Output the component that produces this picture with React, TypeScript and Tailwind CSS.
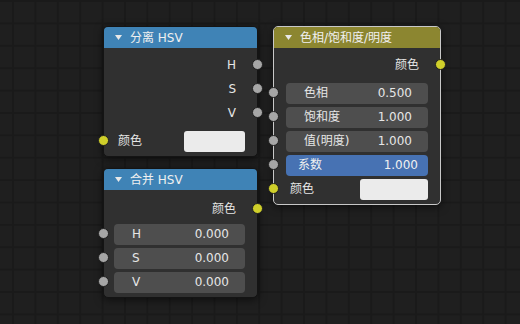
import React from 'react'

const font = { fontFamily: '"DejaVu Sans", "Noto Sans CJK SC", sans-serif' }

function Socket({ side, color }: { side: 'left' | 'right'; color: 'grey' | 'yellow' }) {
  const pos = side === 'left' ? 'left-[-6px]' : 'right-[-6px]'
  const fill = color === 'yellow' ? 'bg-[#cfcf2a]' : 'bg-[#a6a6a6]'
  return (
    <span
      className={`absolute top-[6px] ${pos} w-[11px] h-[11px] ${fill} rounded-full border border-[#202020] z-10`}
    />
  )
}

function Header({ title, color }: { title: string; color: string }) {
  return (
    <div className={`h-[21px] flex items-center pl-[11px] gap-[8px] rounded-t-[4px] ${color}`}>
      <svg width="7" height="5" viewBox="0 0 7 5">
        <path d="M0 0 L7 0 L3.5 5 Z" fill="#e8e8e8" />
      </svg>
      <span className="text-[12px] text-[#f0f0f0]">{title}</span>
    </div>
  )
}

function OutRow({ label, color }: { label: string; color: 'grey' | 'yellow' }) {
  return (
    <div className="relative h-[24px] flex items-center justify-end pr-[21px] text-[12px] text-[#e6e6e6]">
      {label}
      <Socket side="right" color={color} />
    </div>
  )
}

function FieldRow({ label, value, pl = 12 }: { label: string; value: string; pl?: number }) {
  return (
    <div className={`relative h-[24px] flex items-center ${pl === 10 ? 'pl-[10px]' : 'pl-[12px]'} pr-[12px]`}>
      <Socket side="left" color="grey" />
      <div className="flex-1 h-[21px] rounded-[4px] bg-[#4e4e4e] flex items-center justify-between pl-[18px] pr-[16px] text-[12px] text-[#e6e6e6]">
        <span>{label}</span>
        <span>{value}</span>
      </div>
    </div>
  )
}

function ColorRow({ swatchW, labelPl }: { swatchW: string; labelPl: string }) {
  return (
    <div className={`relative h-[24px] flex items-center justify-between ${labelPl} pr-[12px] text-[12px] text-[#e6e6e6]`}>
      <Socket side="left" color="yellow" />
      <span>颜色</span>
      <div className={`${swatchW} h-[21px] rounded-[3px] bg-[#ebebeb]`} />
    </div>
  )
}

export default function App() {
  return (
    <div
      className="relative w-[520px] h-[324px] overflow-hidden bg-[#1f1f1f] bg-[linear-gradient(to_right,#1a1a1a_2px,transparent_2px),linear-gradient(to_bottom,#1a1a1a_2px,transparent_2px)] bg-[size:22.4px_22.4px] bg-[position:12px_0px]"
      style={font}
    >
      {/* 分离 HSV */}
      <div className="absolute left-[103px] top-[26px] w-[155px] h-[131px] rounded-[5px] bg-[#303030] border border-[#141414] shadow-[0_2px_8px_rgba(0,0,0,0.55)]">
        <Header title="分离 HSV" color="bg-[#3f83b6]" />
        <div className="pt-[5px]">
          <OutRow label="H" color="grey" />
          <OutRow label="S" color="grey" />
          <OutRow label="V" color="grey" />
          <div className="h-[4px]" />
          <ColorRow swatchW="w-[61px]" labelPl="pl-[14px]" />
        </div>
      </div>

      {/* 色相/饱和度/明度 */}
      <div className="absolute left-[273px] top-[26px] w-[168px] h-[179px] rounded-[5px] bg-[#303030] border border-[#c8c8c8] shadow-[0_2px_8px_rgba(0,0,0,0.55)]">
        <Header title="色相/饱和度/明度" color="bg-[#8c8630]" />
        <div className="pt-[5px]">
          <OutRow label="颜色" color="yellow" />
          <div className="h-[4px]" />
          <FieldRow label="色相" value="0.500" />
          <FieldRow label="饱和度" value="1.000" />
          <FieldRow label="值(明度)" value="1.000" />
          <div className="relative h-[24px] flex items-center px-[12px]">
            <Socket side="left" color="grey" />
            <div className="flex-1 h-[21px] rounded-[4px] bg-[#4772b3] flex items-center justify-between pl-[12px] pr-[10px] text-[12px] text-[#f0f0f0]">
              <span>系数</span>
              <span>1.000</span>
            </div>
          </div>
          <ColorRow swatchW="w-[68px]" labelPl="pl-[16px]" />
        </div>
      </div>

      {/* 合并 HSV */}
      <div className="absolute left-[103px] top-[168px] w-[155px] h-[130px] rounded-[5px] bg-[#303030] border border-[#141414] shadow-[0_2px_8px_rgba(0,0,0,0.55)]">
        <Header title="合并 HSV" color="bg-[#3f83b6]" />
        <div className="pt-[7px]">
          <OutRow label="颜色" color="yellow" />
          <div className="h-[1px]" />
          <FieldRow label="H" value="0.000" pl={10} />
          <FieldRow label="S" value="0.000" pl={10} />
          <FieldRow label="V" value="0.000" pl={10} />
        </div>
      </div>
    </div>
  )
}
